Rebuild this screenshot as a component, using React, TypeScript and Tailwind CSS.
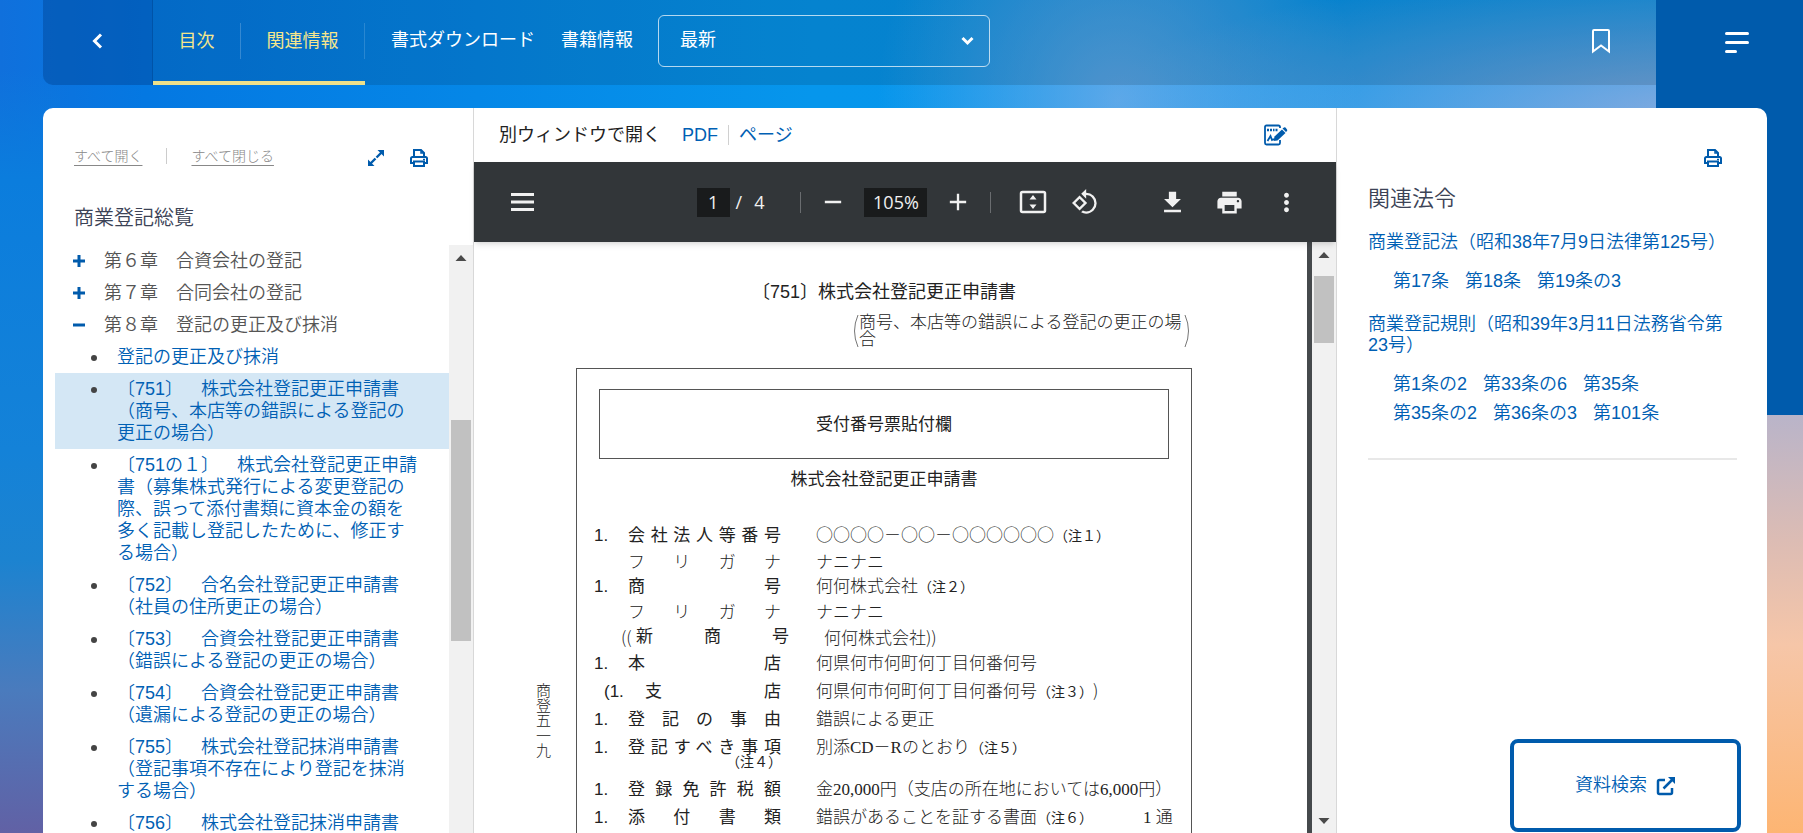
import { useState } from "react";
import type { ReactNode } from "react";
import {
  MdAdd,
  MdDownload,
  MdMoreVert,
  MdPrint,
  MdRemove,
  MdRotate90DegreesCcw,
} from "react-icons/md";

const chapters = [
  { title: "第６章　合資会社の登記", open: false },
  { title: "第７章　合同会社の登記", open: false },
  { title: "第８章　登記の更正及び抹消", open: true },
];

const articles = [
  "登記の更正及び抹消",
  "〔751〕　株式会社登記更正申請書（商号、本店等の錯誤による登記の更正の場合）",
  "〔751の１〕　株式会社登記更正申請書（募集株式発行による変更登記の際、誤って添付書類に資本金の額を多く記載し登記したために、修正する場合）",
  "〔752〕　合名会社登記更正申請書（社員の住所更正の場合）",
  "〔753〕　合資会社登記更正申請書（錯誤による登記の更正の場合）",
  "〔754〕　合資会社登記更正申請書（遺漏による登記の更正の場合）",
  "〔755〕　株式会社登記抹消申請書（登記事項不存在により登記を抹消する場合）",
  "〔756〕　株式会社登記抹消申請書",
];

const laws = [
  {
    title: "商業登記法（昭和38年7月9日法律第125号）",
    refs: ["第17条", "第18条", "第19条の3"],
  },
  {
    title: "商業登記規則（昭和39年3月11日法務省令第23号）",
    refs: ["第1条の2", "第33条の6", "第35条", "第35条の2", "第36条の3", "第101条"],
  },
];

function PrinterIcon() {
  return (
    <svg width="20" height="20" viewBox="0 0 20 20" fill="none" stroke="#005bac" strokeWidth="2">
      <path d="M5 9V2h7l3 3v4" />
      <path d="M12 2v3h3" strokeWidth="1.5" />
      <path d="M5 15H2v-4.500q0-1.500 1.500-1.500h13q1.500 0 1.500 1.500V15h-3" />
      <path d="M5 13.500h10V18H5z" />
      <path d="M14 11.500h2" strokeWidth="1.500" />
    </svg>
  );
}

function ExpandIcon() {
  return (
    <svg width="18" height="18" viewBox="0 0 18 18" fill="none" stroke="#005bac" strokeWidth="2">
      <path d="M9.500 8.500 15 3M8.500 9.500 3 15" strokeWidth="2.400" />
      <path d="M10.500 1h6.500v6.500zM1 10.500V17h6.500z" fill="#005bac" stroke="none" />
    </svg>
  );
}

function NoteIcon() {
  return (
    <svg width="24" height="22" viewBox="0 0 24 22" fill="none" stroke="#005bac" strokeWidth="1.800">
      <path d="M16 4V3q0-1.500-1.500-1.500h-12Q1 1.500 1 3v16q0 1.500 1.500 1.500h12Q16 20.500 16 19v-3" />
      <path d="M3 6h2M6 6h2M9 6h1.500M11.500 6h2" strokeWidth="2.500" />
      <path d="m3.500 17 3-5 1.500 4 2-1" />
      <path d="m9.500 17 1-4.500L18 5.500l3.500 3.500-8 7.500z" fill="#005bac" stroke="none" />
      <path d="m18.500 4.500 1.500-1q.7-.5 1.500 0L23 5.500q.6.700 0 1.500l-1 1z" fill="#005bac" stroke="none" />
    </svg>
  );
}

function ExternalIcon() {
  return (
    <svg width="20" height="20" viewBox="0 0 20 20" fill="none" stroke="#005bac" strokeWidth="2.500">
      <path d="M9 4H3.500Q2 4 2 5.500v11Q2 18 3.500 18h11q1.500 0 1.500-1.500V12" />
      <path d="m7.500 12.500 9-9" />
      <path d="M12 1h7v7z" fill="#005bac" stroke="none" />
    </svg>
  );
}

function FitPageIcon() {
  return (
    <svg width="28" height="24" viewBox="0 0 28 24" fill="#f1f1f1">
      <rect x="2" y="2" width="24" height="20" rx="1.500" fill="none" stroke="#f1f1f1" strokeWidth="2.500" />
      <path d="m14 5 3.500 4.500h-7zM14 19l3.500-4.500h-7z" />
    </svg>
  );
}

function Triangle({ down = false }: { down?: boolean }) {
  return (
    <svg width="12" height="8" viewBox="0 0 12 8" className={down ? "rotate-180" : ""}>
      <path d="m6 1 5.500 6H.5z" fill="#4a4a4a" />
    </svg>
  );
}

function Note({ n }: { n: string }) {
  return (
    <span className="font-['Noto_Sans_CJK_JP',sans-serif] text-sm font-normal">（注{n}）</span>
  );
}

type RowProps = {
  no?: string;
  label: string;
  children: ReactNode;
  height?: string;
  light?: boolean;
};

function Row({ no = "", label, children, height = "h-7", light = false }: RowProps) {
  return (
    <div className={`flex items-center ${height}`}>
      <dt className="flex w-[222px] pr-[18px]">
        <span className="w-[34px]">{no}</span>
        <span
          className={`w-[153px] [text-align-last:justify] ${light ? "font-light" : ""}`}
        >
          {label}
        </span>
      </dt>
      <dd className="font-['Liberation_Serif','Noto_Sans_CJK_JP',serif] font-light whitespace-nowrap">
        {children}
      </dd>
    </div>
  );
}

function Header() {
  return (
    <header className="ml-[43px] mr-[147px] flex h-[85px] shrink-0 rounded-bl-[10px] bg-black/12 text-lg text-white">
      <button
        type="button"
        aria-label="戻る"
        className="flex w-[110px] items-center justify-center rounded-bl-[10px] border-r border-[#0053a8] bg-[#0052b4]/40 pr-[2px] pb-1"
      >
        <svg width="12" height="16" viewBox="0 0 12 16" fill="none" stroke="white" strokeWidth="3">
          <path d="M10 1.500 3.500 8l6.500 6.500" />
        </svg>
      </button>
      <nav className="flex">
        <div className="flex items-center border-b-4 border-[#eee08a] text-[#f5e68c]">
          <button type="button" className="w-[88px] border-r border-white/20 py-1">
            目次
          </button>
          <button type="button" className="w-[124px] border-r border-white/15 py-1">
            関連情報
          </button>
        </div>
        <a href="#download" className="ml-[26px] self-center pb-[5px]">
          書式ダウンロード
        </a>
        <a href="#book" className="ml-[26px] self-center pb-[5px]">
          書籍情報
        </a>
      </nav>
      <div className="relative ml-[25px] mt-[15px] h-[52px] w-[332px]">
        <select
          aria-label="版"
          className="h-full w-full appearance-none rounded-md border border-white/70 bg-transparent pb-[2px] pl-[21px] text-white"
        >
          <option>最新</option>
        </select>
        <svg
          className="pointer-events-none absolute right-4 top-5"
          width="13"
          height="12"
          viewBox="0 0 13 12"
          fill="none"
          stroke="white"
          strokeWidth="3"
        >
          <path d="m1.500 3 5 5 5-5" />
        </svg>
      </div>
      <button type="button" aria-label="ブックマーク" className="ml-auto mr-[45px] mb-1">
        <svg width="20" height="26" viewBox="0 0 20 26" fill="none" stroke="white" strokeWidth="2">
          <path d="M2 23.500V3q0-1 1-1h14q1 0 1 1v20.500l-8-6z" />
        </svg>
      </button>
    </header>
  );
}

function Contents() {
  const [selected, setSelected] = useState(1);

  return (
    <aside className="flex w-[431px] shrink-0 flex-col border-r border-[#d8d8d8]">
      <div className="flex items-center pl-[31px] pr-11 pt-9 text-sm text-[#888]">
        <button type="button" className="font-light underline underline-offset-4">
          すべて開く
        </button>
        <span className="mx-6 h-4 w-px bg-[#ccc]" />
        <button type="button" className="font-light underline underline-offset-4">
          すべて閉じる
        </button>
        <button type="button" aria-label="拡大" className="ml-auto mr-6 pt-1">
          <ExpandIcon />
        </button>
        <button type="button" aria-label="印刷" className="pt-1">
          <PrinterIcon />
        </button>
      </div>
      <h2 className="ml-[31px] mt-9 text-xl leading-7 font-[350] text-[#3c4356]">
        商業登記総覧
      </h2>
      <div className="mt-[13px] flex min-h-0 flex-1">
        <ul className="min-w-0 flex-1 overflow-hidden pl-3 text-lg leading-[22px] font-[350] text-[#555]">
          {chapters.map((chapter) => (
            <li key={chapter.title}>
              <button type="button" className="flex items-center py-[5px] pl-[17px]">
                <svg width="14" height="14" viewBox="0 0 14 14" stroke="#005bac" strokeWidth="3">
                  <path d={chapter.open ? "M1 7h12" : "M1 7h12M7 1v12"} />
                </svg>
                <span className="ml-[18px]">{chapter.title}</span>
              </button>
            </li>
          ))}
          {articles.map((article, i) => (
            <li
              key={article}
              className={
                selected === i
                  ? "flex bg-[#d4e7f5] py-[5px] pl-9 pr-7"
                  : "flex py-[5px] pl-9 pr-7"
              }
            >
              <span className="mt-[9px] mr-5 size-[6px] shrink-0 rounded-full bg-[#444]" />
              <a href="#article" onClick={() => setSelected(i)} className="text-[#0060b4]">
                {article}
              </a>
            </li>
          ))}
        </ul>
        <div className="flex w-6 flex-col items-center bg-[#f1f1f1] pt-[9px]">
          <Triangle />
          <div className="mt-[158px] h-[221px] w-5 bg-[#c1c1c1]" />
        </div>
      </div>
    </aside>
  );
}

function Toolbar() {
  const [page, setPage] = useState("1");
  const [zoom, setZoom] = useState("105%");

  return (
    <div className="relative flex h-20 shrink-0 items-center bg-[#323639] pl-[37px] pr-[35px] font-['Open_Sans'] text-lg text-[#f1f1f1] shadow-md">
      <button type="button" aria-label="メニュー">
        <svg width="23" height="18" viewBox="0 0 23 18" fill="#f1f1f1">
          <path d="M0 0h23v3H0zM0 7.500h23v3H0zM0 15h23v3H0z" />
        </svg>
      </button>
      <div className="ml-auto flex items-center pl-[104px]">
        <input
          aria-label="ページ"
          value={page}
          onChange={(e) => setPage(e.target.value)}
          className="h-[29px] w-[33px] bg-[#191b1c] text-center"
        />
        <span className="ml-[6px]">/</span>
        <span className="ml-3">4</span>
        <span className="ml-9 h-[21px] w-px bg-[#6a6d70]" />
        <button type="button" aria-label="縮小" className="ml-[18px]">
          <MdRemove size={28} />
        </button>
        <input
          aria-label="倍率"
          value={zoom}
          onChange={(e) => setZoom(e.target.value)}
          className="ml-[17px] h-[29px] w-[63px] bg-[#191b1c] text-center"
        />
        <button type="button" aria-label="拡大" className="ml-[17px]">
          <MdAdd size={28} />
        </button>
        <span className="ml-[18px] h-[21px] w-px bg-[#6a6d70]" />
        <button type="button" aria-label="ページに合わせる" className="ml-[28px]">
          <FitPageIcon />
        </button>
        <button type="button" aria-label="回転" className="ml-6">
          <MdRotate90DegreesCcw size={28} />
        </button>
      </div>
      <div className="ml-auto flex items-center gap-7">
        <button type="button" aria-label="ダウンロード">
          <MdDownload size={29} />
        </button>
        <button type="button" aria-label="印刷">
          <MdPrint size={29} />
        </button>
        <button type="button" aria-label="その他">
          <MdMoreVert size={29} />
        </button>
      </div>
    </div>
  );
}

function DocumentPage() {
  return (
    <div className="min-w-0 flex-1 overflow-hidden bg-white pr-[115px] text-[17px] leading-[17px] text-[#222]">
      <h1 className="mt-10 ml-[102px] text-center text-lg leading-5">
        〔751〕株式会社登記更正申請書
      </h1>
      <div className="mt-3 mr-[2px] flex justify-end font-light">
        <svg width="6" height="34" viewBox="0 0 6 34" fill="none" stroke="#777">
          <path d="M5 1Q-2 17 5 33" />
        </svg>
        <p className="w-[325px] whitespace-nowrap">
          商号、本店等の錯誤による登記の更正の場
          <br />合
        </p>
        <svg width="6" height="34" viewBox="0 0 6 34" fill="none" stroke="#777">
          <path d="M1 1Q8 17 1 33" />
        </svg>
      </div>
      <div className="mt-5 flex">
        <p className="mt-[315px] w-[102px] shrink-0 pr-[26px] text-[15px] leading-[15px] font-light [writing-mode:vertical-rl]">
          商登五一九
        </p>
        <section className="min-w-0 flex-1 border border-[#555] px-[17px] pt-5">
          <div className="mx-[5px] flex h-[70px] items-center justify-center border border-[#555]">
            受付番号票貼付欄
          </div>
          <h2 className="mt-3 text-center">株式会社登記更正申請書</h2>
          <dl className="mt-[33px] h-[380px]">
            <Row no="1." label="会社法人等番号">
              <span className="font-['Noto_Sans_CJK_JP',sans-serif]">○○○○－○○－○○○○○○</span>
              <Note n="１" />
            </Row>
            <Row label="フリガナ" height="h-[26px]" light>
              ナニナニ
            </Row>
            <Row no="1." label="商号" height="h-[22px]">
              何何株式会社
              <Note n="２" />
            </Row>
            <Row label="フリガナ" height="h-[30px]" light>
              ナニナニ
            </Row>
            <div className="mb-[3px] flex h-[19px] items-center">
              <dt className="flex w-[230px] pl-[27px]">
                <span className="w-[15px] font-['Noto_Sans_CJK_JP',sans-serif] font-light">((</span>
                <span className="w-[153px] [text-align-last:justify]">新商号</span>
              </dt>
              <dd className="font-['Noto_Sans_CJK_JP',sans-serif] font-light">何何株式会社))</dd>
            </div>
            <Row no="1." label="本店">
              何県何市何町何丁目何番何号
            </Row>
            <div className="flex h-7 items-center">
              <dt className="flex w-[222px] pl-[10px]">
                <span className="w-[41px]">(1.</span>
                <span className="w-[136px] [text-align-last:justify]">支店</span>
              </dt>
              <dd className="font-['Noto_Sans_CJK_JP',sans-serif] font-light whitespace-nowrap">
                何県何市何町何丁目何番何号
                <Note n="３" />)
              </dd>
            </div>
            <Row no="1." label="登記の事由">
              錯誤による更正
            </Row>
            <Row no="1." label="登記すべき事項">
              別添CD－Rのとおり
              <Note n="５" />
            </Row>
            <div className="-mt-[10px] mb-[9px] ml-[132px] h-[15px]">
              <Note n="４" />
            </div>
            <Row no="1." label="登録免許税額">
              金20,000円（支店の所在地においては6,000円）
            </Row>
            <Row no="1." label="添付書類">
              錯誤があることを証する書面
              <Note n="６" />
              <span className="ml-[50px]">1 通</span>
            </Row>
          </dl>
        </section>
      </div>
    </div>
  );
}

function Viewer() {
  return (
    <main className="flex min-w-0 flex-1 flex-col">
      <div className="flex h-[54px] shrink-0 items-center pl-[25px] pr-[48px] pb-px text-lg">
        <span className="text-[#222]">別ウィンドウで開く</span>
        <a href="#pdf" className="ml-[21px] text-[#0060b4]">
          PDF
        </a>
        <span className="mx-[10px] h-5 w-px bg-[#d0d0d0]" />
        <a href="#page" className="text-[#0060b4]">
          ページ
        </a>
        <button type="button" aria-label="ノート" className="ml-auto">
          <NoteIcon />
        </button>
      </div>
      <Toolbar />
      <div className="flex min-h-0 flex-1">
        <DocumentPage />
        <div className="w-[5px] bg-[#45494c]" />
        <div className="flex w-6 flex-col items-center bg-[#f1f1f1] pt-[9px] pb-2">
          <Triangle />
          <div className="mt-[17px] h-[67px] w-5 bg-[#c1c1c1]" />
          <div className="mt-auto">
            <Triangle down />
          </div>
        </div>
      </div>
    </main>
  );
}

function RelatedLaws() {
  return (
    <aside className="flex w-[431px] shrink-0 flex-col border-l border-[#d8d8d8] pl-[31px] text-lg leading-[21px] font-[350] text-[#0060b4]">
      <button type="button" aria-label="印刷" className="mt-10 mr-11 self-end">
        <PrinterIcon />
      </button>
      <h2 className="mt-[18px] text-[22px] leading-[26px] text-[#3c4356]">関連法令</h2>
      <div className="mr-[30px] border-b-2 border-[#e8e8e8] pb-8">
        {laws.map((law) => (
          <section key={law.title} className="mt-5">
            <a href="#law">{law.title}</a>
            <ul className="mt-[18px] mr-10 ml-[25px] flex flex-wrap gap-x-4 gap-y-2 pb-[2px]">
              {law.refs.map((ref) => (
                <li key={ref}>
                  <a href="#ref">{ref}</a>
                </li>
              ))}
            </ul>
          </section>
        ))}
      </div>
      <button
        type="button"
        className="mt-auto mr-[26px] mb-px flex h-[93px] w-[231px] items-center justify-center gap-[9px] self-end rounded-lg border-4 border-[#005bac]"
      >
        資料検索
        <ExternalIcon />
      </button>
    </aside>
  );
}

export default function App() {
  return (
    <div className="relative flex h-screen flex-col overflow-hidden bg-[linear-gradient(180deg,#0b7cdc00_70px,#0b7ddd_180px,#1482d8_450px,#1c83d0_560px,#4a7bbd_690px,#6161a5_833px)] bg-[length:60px_100%] bg-no-repeat font-['Liberation_Sans','Noto_Sans_CJK_JP',sans-serif] [text-spacing-trim:space-all]">
      {/* Sky behind the header and along the right edge */}
      <div className="absolute inset-0 -z-10 bg-[radial-gradient(ellipse_240px_260px_at_62%_100px,#78aee8bf,#78aee800),radial-gradient(ellipse_620px_150px_at_95%_115px,#86abdf,#86abdf00),linear-gradient(90deg,#1070dc,#0478e2_8%,#0696ec_45%,#0894ea)]" />
      <div className="absolute right-0 bottom-0 -z-10 h-[418px] w-[60px] bg-[linear-gradient(180deg,#b9b4c9,#dcbcb4_30%,#f6c6a8_55%,#fdb573)]" />
      <button
        type="button"
        aria-label="メニューを開く"
        className="absolute top-0 right-0 flex h-[415px] w-[147px] flex-col gap-[6px] bg-[#005bac] pt-8 pl-[69px]"
      >
        <span className="h-[3px] w-6 rounded-full bg-white" />
        <span className="h-[3px] w-6 rounded-full bg-white" />
        <span className="h-[3px] w-3 rounded-full bg-white" />
      </button>
      <Header />
      <div className="relative mt-[23px] ml-[43px] mr-9 flex min-h-0 flex-1 overflow-hidden rounded-t-[10px] bg-white">
        <Contents />
        <Viewer />
        <RelatedLaws />
      </div>
    </div>
  );
}
